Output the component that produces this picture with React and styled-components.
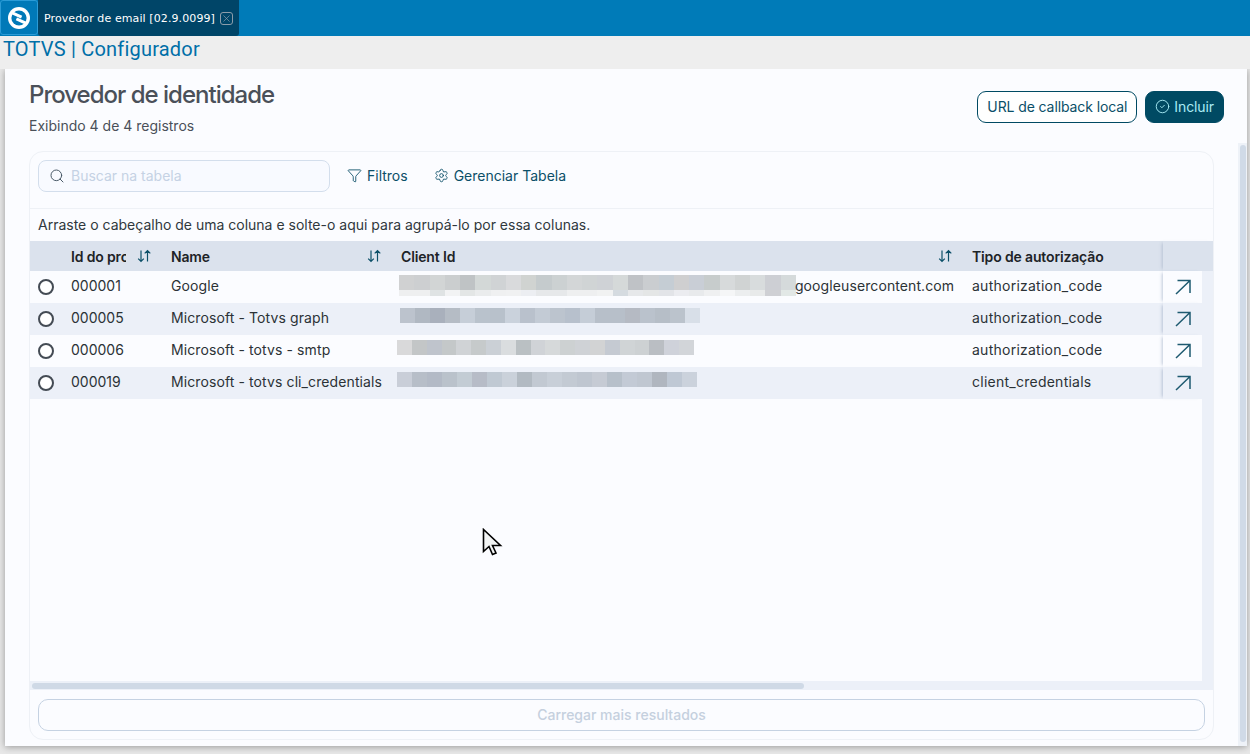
import React from "react";
import styled, { createGlobalStyle } from "styled-components";
import { Search, Filter, CircleCheck, Settings, X } from "lucide-react";

const sans = `"Inter", "Liberation Sans", sans-serif`;

const GlobalStyle = createGlobalStyle`
  html, body { margin: 0; padding: 0; height: 100%; overflow: hidden; }
  body { background: #e8e8e8; font-family: ${sans}; }
  * { box-sizing: border-box; }
`;

const Page = styled.div`
  width: 1250px;
  height: 754px;
  display: flex;
  flex-direction: column;
  overflow: hidden;
`;

const TopBar = styled.div`
  height: 36px;
  background: #007bb8;
  display: flex;
`;

const LogoBox = styled.div`
  width: 38px;
  height: 35px;
  background: #0079b8;
  border: 1px solid #2b9bd6;
  border-radius: 3px;
  display: flex;
  align-items: center;
  justify-content: center;
`;

const Tab = styled.div`
  width: 201px;
  background: #004568;
  border-radius: 0 0 3px 3px;
  display: flex;
  align-items: center;
  padding-left: 6px;
  gap: 5px;
  color: #fff;
  font: 11px "DejaVu Sans", sans-serif;
  letter-spacing: 0.1px;
`;

const TabClose = styled.span`
  width: 13px;
  height: 13px;
  border: 1px solid #8d9daa;
  border-radius: 3px;
  display: flex;
  align-items: center;
  justify-content: center;
  color: #8d9daa;
`;

const SubBar = styled.div`
  height: 33px;
  background: #eeeeee;
  padding-left: 3px;
  color: #006fa8;
  font: 20px/27px "Roboto", sans-serif;
  letter-spacing: 0.2px;
  position: relative;
  z-index: 1;
`;

const Panel = styled.main`
  flex: none;
  width: 1242px;
  height: 677px;
  margin-left: 5px;
  background: #fbfcff;
  box-shadow: 0 1px 7px rgba(0, 0, 0, 0.35);
  position: relative;
  padding: 0 24px;
`;

const Heading = styled.div`
  height: 82px;
  display: flex;
  justify-content: space-between;
  align-items: flex-start;
`;

const Title = styled.h1`
  margin: 11px 0 0;
  font-size: 24px;
  line-height: 29px;
  font-weight: 500;
  color: #4a5059;
  letter-spacing: -1px;
`;

const Subtitle = styled.div`
  margin-top: 8px;
  font-size: 14px;
  line-height: 18px;
  color: #4a5059;
`;

const Actions = styled.div`
  display: flex;
  gap: 8px;
  margin: 22px -1px 0 0;
`;

const Button = styled.button`
  height: 32px;
  padding: 0 9px 2px;
  border-radius: 9px;
  border: 1px solid #004a63;
  background: ${(p) => (p.$primary ? "#004a63" : "#fff")};
  color: ${(p) => (p.$primary ? "#a9ecf5" : "#0b4f68")};
  display: flex;
  align-items: center;
  gap: 4px;
  font: 14px ${sans};
  letter-spacing: -0.1px;
`;

const Card = styled.section`
  width: 1185px;
  height: 589px;
  border: 1px solid #eef1f6;
  border-radius: 14px;
  display: flex;
  flex-direction: column;
  overflow: hidden;
`;

const Toolbar = styled.div`
  height: 57px;
  flex: none;
  border-bottom: 1px solid #eef1f6;
  display: flex;
  align-items: center;
  padding: 0 8px 8px;
`;

const SearchBox = styled.div`
  width: 292px;
  height: 32px;
  border: 1px solid #d3deec;
  border-radius: 8px;
  background: #f8faff;
  display: flex;
  align-items: center;
  gap: 6px;
  padding: 0 0 1px 10px;
  color: #4a5a68;
  font-size: 14px;
  span { color: #c5d2e4; }
`;

const ToolButton = styled.div`
  display: flex;
  align-items: center;
  gap: 5px;
  height: 32px;
  padding-bottom: 1px;
  margin-left: ${(p) => p.$gap}px;
  color: #0b4f68;
  font-size: 14px;
`;

const GroupHint = styled.div`
  height: 32px;
  flex: none;
  padding-left: 8px;
  font-size: 14px;
  line-height: 31px;
  color: #30383d;
`;

const TableArea = styled.div`
  position: relative;
  flex: 1;
  min-height: 0;
`;

const columns = "32px 100px 230px 571px 200px 40px 1fr";

const HeadRow = styled.div`
  display: grid;
  grid-template-columns: ${columns};
  height: 30px;
  background: #dbe2ed;
  color: #1d2327;
  font-size: 14px;
  font-weight: 600;
  letter-spacing: -0.15px;
`;

const HeadCell = styled.div`
  display: flex;
  align-items: center;
  justify-content: space-between;
  padding: 0 10px 0 9px;
  overflow: hidden;
  span { overflow: hidden; white-space: nowrap; flex: ${(p) => (p.$clip ? "none" : "1")}; width: ${(p) => (p.$clip ? "55px" : "auto")}; }
`;

const ActionHead = styled.div`
  grid-column: 6 / 8;
  box-shadow: -3px 0 3px -2px rgba(120, 140, 170, 0.35);
`;

const Row = styled.div`
  display: grid;
  grid-template-columns: ${columns};
  height: 32px;
  background: ${(p) => (p.$odd ? "#ecf0f8" : "#fbfcff")};
  color: #2b3236;
  font-size: 14px;
`;

const Cell = styled.div`
  display: flex;
  align-items: center;
  padding: 0 0 3px 9px;
  white-space: nowrap;
  letter-spacing: ${(p) => p.$track || 0}px;
`;

const RadioCell = styled.div`
  display: flex;
  align-items: center;
  justify-content: flex-end;
  padding-right: 8px;
`;

const Radio = styled.span`
  width: 16px;
  height: 16px;
  border: 2px solid #444b54;
  border-radius: 50%;
  background: #fff;
`;

const ActionCell = styled.div`
  display: flex;
  align-items: center;
  justify-content: center;
  padding-bottom: 1px;
  background: ${(p) => (p.$odd ? "#ecf0f8" : "#fbfcff")};
  box-shadow: -3px 0 3px -2px rgba(120, 140, 170, 0.45);
`;

const Track = styled.div`
  background: #ecf0f8;
`;

const Mosaic = styled.div`
  display: flex;
  flex: none;
  flex-direction: column;
  margin-left: ${(p) => p.$shift}px;
  margin-right: ${(p) => (p.$tight ? -1 : 0)}px;
  margin-top: ${(p) => p.$top}px;
`;

const Strip = styled.div`
  display: flex;
  height: ${(p) => p.$h}px;
`;

const Pixel = styled.i`
  display: block;
  flex: none;
  width: ${(p) => p.$w}px;
  height: 100%;
  background: ${(p) => p.$c};
`;

const SideTrack = styled.div`
  position: absolute;
  right: 0;
  top: 30px;
  bottom: 0;
  width: 11px;
  background: #ecf0f8;
`;

const HScroll = styled.div`
  position: absolute;
  left: 0;
  right: 0;
  bottom: 0;
  height: 9px;
  background: #ecf0f8;
  padding: 2px;
`;

const HThumb = styled.div`
  width: 772px;
  height: 6px;
  border-radius: 3px;
  background: #cfd9e6;
`;

const Footer = styled.div`
  height: 49px;
  flex: none;
  padding: 9px 8px 8px;
`;

const LoadMore = styled.button`
  width: 100%;
  height: 32px;
  padding: 0 0 2px;
  border: 1px solid #c5d2e2;
  border-radius: 10px;
  background: #fbfcff;
  color: #c5d0de;
  font: 500 14px ${sans};
`;

const PageScroll = styled.div`
  position: absolute;
  right: 0;
  top: 74px;
  bottom: 0;
  width: 9px;
  background: #eef2f8;
  padding: 2px 1px 4px 2px;
`;

const PageThumb = styled.div`
  height: 100%;
  border-radius: 3px;
  background: #d0dae7;
`;

const Pointer = styled.svg`
  position: absolute;
  left: 477px;
  top: 459px;
`;

const SortIcon = () => (
  <svg width="15" height="14" viewBox="0 0 15 14" fill="none" stroke="#0b4f68" strokeWidth="1.2">
    <path d="M4 1.5v11M1.2 9.6 4 12.5l2.8-2.9M10.5 12.5v-11M7.7 4.4l2.8-2.9 2.8 2.9" />
  </svg>
);

const OpenIcon = () => (
  <svg width="16" height="16" viewBox="0 0 16 16" fill="none" stroke="#1e5a70" strokeWidth="1.5">
    <path d="M1 15 15 1.5M2.5 1.5H15V14" />
  </svg>
);

const row1Top = ["#d0d1d2","#cdcfd1","#d2d5d5","#cbcecf","#bfc3c5","#d3d8d7","#d0d3d5","#d9dadc","#d0d3d1","#c5cbcd","#ccd1d2","#d3d6d7","#d0d4d5","#cfd2d6","#d5d9d9","#bfc2c6","#cacdd0","#c5cdd4","#cfcfd0","#c9ced6","#c7cccc","#d7dadb","#d0d3d3","#d8dcdd","#cdcfd4","#d5dadb"];
const row1Bottom = ["#eeeff0","#eeeff0","#dfe3e4","#f2f3f4","#e3e6e6","#eaeced","#eff0f1","#f0f1f2","#eceef2","#e6e8ea","#e6e8ea","#eeeff0","#eeeff0","#f1f2f2","#d5dbe0","#e6e8ea","#e4e6e6","#e2e4e8","#ebecf0","#e8eaec","#eff0f1","#f5f6f7","#eceeef","#e8eaea","#cfd0d4","#e2e8e6"];
const row2 = ["#bcc3cd","#b0b8c2","#a9b0bc","#b5bcc5","#c6ced8","#b9c2cc","#b8c1cb","#cad2dc","#b9c1cc","#c3cbd5","#bcc4ce","#b7c0cc","#c5cdd7","#b7bfc9","#b7bfc9","#b5bac3","#bac2cc","#b6bec7","#bbc3cc","#d8dfe8"];
const row3 = ["#d9d9da","#c3c6c7","#bfc4cc","#c4c8c9","#d0d3d6","#c6cacb","#cbd0d6","#dadddf","#bac0c3","#d0d3d7","#d6d9da","#cdd1d2","#cfd2d6","#d2d3d4","#c5cad2","#d0d4d6","#cdd1d3","#babec3","#cfd2da","#d2d5d9"];
const row4 = ["#c9ced8","#b7bec8","#b3bac6","#bac2cb","#c3ccd4","#b7bcc7","#c0c9d3","#cad1da","#b2bac2","#c2c9d2","#c8cfd8","#c3cad3","#bfc6d0","#c6cbd4","#b7c0ca","#c3cad5","#c0c7d1","#b0b6bf","#bfc8d4","#cbd2dc"];

const rows = [
  { id: "000001", name: "Google", auth: "authorization_code", shift: -2, top: 0, cell: 15.27, strips: [{ h: 15, c: row1Top }, { h: 6, c: row1Bottom }], suffix: "googleusercontent.com" },
  { id: "000005", name: "Microsoft - Totvs graph", auth: "authorization_code", shift: -1, top: -4, cell: 15, strips: [{ h: 15, c: row2 }] },
  { id: "000006", name: "Microsoft - totvs - smtp", auth: "authorization_code", shift: -4, top: -4, cell: 14.85, strips: [{ h: 15, c: row3 }] },
  { id: "000019", name: "Microsoft - totvs cli_credentials", auth: "client_credentials", shift: -4, top: -4, cell: 15, strips: [{ h: 15, c: row4 }] },
];

export default function App() {
  return (
    <>
      <GlobalStyle />
      <Page>
        <TopBar>
          <LogoBox>
            <svg width="26" height="26" viewBox="0 0 26 26">
              <circle cx="13" cy="13" r="11" fill="#fff" />
              <circle cx="13" cy="13" r="7.6" fill="#0079b8" />
              <g fill="#fff" transform="rotate(24 13 13)">
                <rect x="3" y="9.6" width="12" height="3" />
                <rect x="11" y="13.4" width="12" height="3" />
              </g>
            </svg>
          </LogoBox>
          <Tab>
            Provedor de email [02.9.0099]
            <TabClose><X size={11} strokeWidth={1.5} /></TabClose>
          </Tab>
        </TopBar>
        <SubBar>TOTVS | Configurador</SubBar>
        <Panel>
          <Heading>
            <div>
              <Title>Provedor de identidade</Title>
              <Subtitle>Exibindo 4 de 4 registros</Subtitle>
            </div>
            <Actions>
              <Button>URL de callback local</Button>
              <Button $primary><CircleCheck size={15} strokeWidth={1.5} /> Incluir</Button>
            </Actions>
          </Heading>
          <Card>
            <Toolbar>
              <SearchBox>
                <Search size={16} strokeWidth={1.5} />
                <span>Buscar na tabela</span>
              </SearchBox>
              <ToolButton $gap={17}><Filter size={15} strokeWidth={1.4} /> Filtros</ToolButton>
              <ToolButton $gap={26}><Settings size={15} strokeWidth={1.4} /> Gerenciar Tabela</ToolButton>
            </Toolbar>
            <GroupHint>Arraste o cabeçalho de uma coluna e solte-o aqui para agrupá-lo por essa colunas.</GroupHint>
            <TableArea>
              <HeadRow>
                <div />
                <HeadCell $clip><span>Id do provedor</span><SortIcon /></HeadCell>
                <HeadCell><span>Name</span><SortIcon /></HeadCell>
                <HeadCell><span>Client Id</span><SortIcon /></HeadCell>
                <HeadCell><span>Tipo de autorização</span></HeadCell>
                <ActionHead />
              </HeadRow>
              {rows.map((r, i) => (
                <Row key={r.id} $odd={i % 2 === 1}>
                  <RadioCell><Radio /></RadioCell>
                  <Cell>{r.id}</Cell>
                  <Cell $track={0.1}>{r.name}</Cell>
                  <Cell $track={0.1}>
                    <Mosaic $shift={r.shift} $top={r.top} $tight={!!r.suffix}>
                      {r.strips.map((s) => (
                        <Strip key={s.h} $h={s.h}>
                          {s.c.map((c, j) => <Pixel key={j} $c={c} $w={r.cell} />)}
                        </Strip>
                      ))}
                    </Mosaic>
                    {r.suffix}
                  </Cell>
                  <Cell $track={0.25}>{r.auth}</Cell>
                  <ActionCell $odd={i % 2 === 1}><OpenIcon /></ActionCell>
                  <Track />
                </Row>
              ))}
              <SideTrack />
              <HScroll><HThumb /></HScroll>
            </TableArea>
            <Footer><LoadMore>Carregar mais resultados</LoadMore></Footer>
          </Card>
          <PageScroll><PageThumb /></PageScroll>
          <Pointer width="22" height="30" viewBox="0 0 22 30">
            <path d="M1.5 1.5v22l5.5-5 3.5 8 3.5-1.5-3.5-7.5h8z" fill="#f2f4f4" stroke="#000" strokeWidth="1.6" />
          </Pointer>
        </Panel>
      </Page>
    </>
  );
}
